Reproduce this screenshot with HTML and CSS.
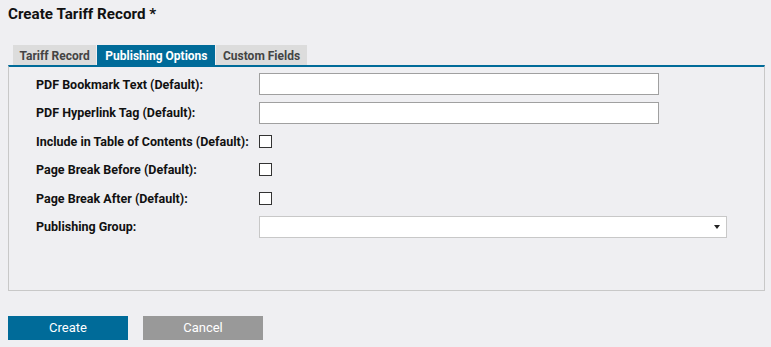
FILE: index.html
```html
<!DOCTYPE html>
<html>
<head>
<meta charset="utf-8">
<link rel="stylesheet" href="styles.css">
</head>
<body>
<div class="page">
  <h1 class="title">Create Tariff Record *</h1>
  <div class="tabs">
    <div class="tab">Tariff Record</div>
    <div class="tab active">Publishing Options</div>
    <div class="tab">Custom Fields</div>
  </div>
  <div class="panel">
    <div class="row">
      <label class="label">PDF Bookmark Text (Default):</label>
      <input class="text" type="text">
    </div>
    <div class="row">
      <label class="label">PDF Hyperlink Tag (Default):</label>
      <input class="text" type="text">
    </div>
    <div class="row">
      <label class="label">Include in Table of Contents (Default):</label>
      <span class="check"></span>
    </div>
    <div class="row">
      <label class="label">Page Break Before (Default):</label>
      <span class="check"></span>
    </div>
    <div class="row">
      <label class="label">Page Break After (Default):</label>
      <span class="check"></span>
    </div>
    <div class="row">
      <label class="label">Publishing Group:</label>
      <div class="select"><span class="arrow"></span></div>
    </div>
  </div>
  <div class="actions">
    <button class="btn primary">Create</button>
    <button class="btn secondary">Cancel</button>
  </div>
</div>
</body>
</html>
```

FILE: styles.css
```css
html, body {
  margin: 0;
  padding: 0;
  background: #efeff2;
}
body {
  font-family: Roboto, "Open Sans", sans-serif;
  color: #111;
}
.page {
  padding: 0 6px 0 8px;
}
.title {
  margin: 0;
  padding-top: 3px;
  font-size: 15.2px;
  line-height: 22px;
  font-weight: 700;
  color: #111;
}
.tabs {
  display: flex;
  gap: 1px;
  margin-top: 20px;
  padding-left: 5px;
  height: 20px;
}
.tab {
  box-sizing: border-box;
  height: 20px;
  background: #dcdcdc;
  color: #444;
  font-size: 12px;
  font-weight: 700;
  line-height: 18px;
  padding: 2px 6.5px 0;
  white-space: nowrap;
}
.tab.active {
  background: #006b99;
  color: #fff;
  padding: 2px 8px 0;
}
.panel {
  border: 1px solid #c8c8c8;
  border-top: 2px solid #006b99;
  padding: 6px 0 52px 27px;
  display: flex;
  flex-direction: column;
  gap: 6.6px;
}
.row {
  display: flex;
  align-items: center;
  height: 22px;
}
.label {
  width: 223px;
  font-size: 12.5px;
  font-weight: 700;
  color: #111;
  white-space: nowrap;
}
.text {
  box-sizing: border-box;
  width: 400px;
  height: 22px;
  border: 1px solid #a0a0a0;
  background: #fff;
  margin: 0;
  padding: 0 4px;
}
.check {
  box-sizing: border-box;
  width: 13px;
  height: 13px;
  border: 1px solid #333;
  background: #fff;
}
.select {
  box-sizing: border-box;
  width: 468px;
  height: 22px;
  border: 1px solid #c8c8c8;
  background: #fff;
  display: flex;
  align-items: center;
  justify-content: flex-end;
  padding-right: 6px;
}
.arrow {
  width: 0;
  height: 0;
  border-left: 3.5px solid transparent;
  border-right: 3.5px solid transparent;
  border-top: 4px solid #222;
}
.actions {
  display: flex;
  gap: 15px;
  margin-top: 25px;
}
.btn {
  width: 120px;
  height: 24px;
  border: none;
  margin: 0;
  color: #fff;
  font-family: Roboto, "Open Sans", sans-serif;
  font-size: 13px;
  padding: 0;
}
.primary { background: #006b99; }
.secondary { background: #999; }
```
